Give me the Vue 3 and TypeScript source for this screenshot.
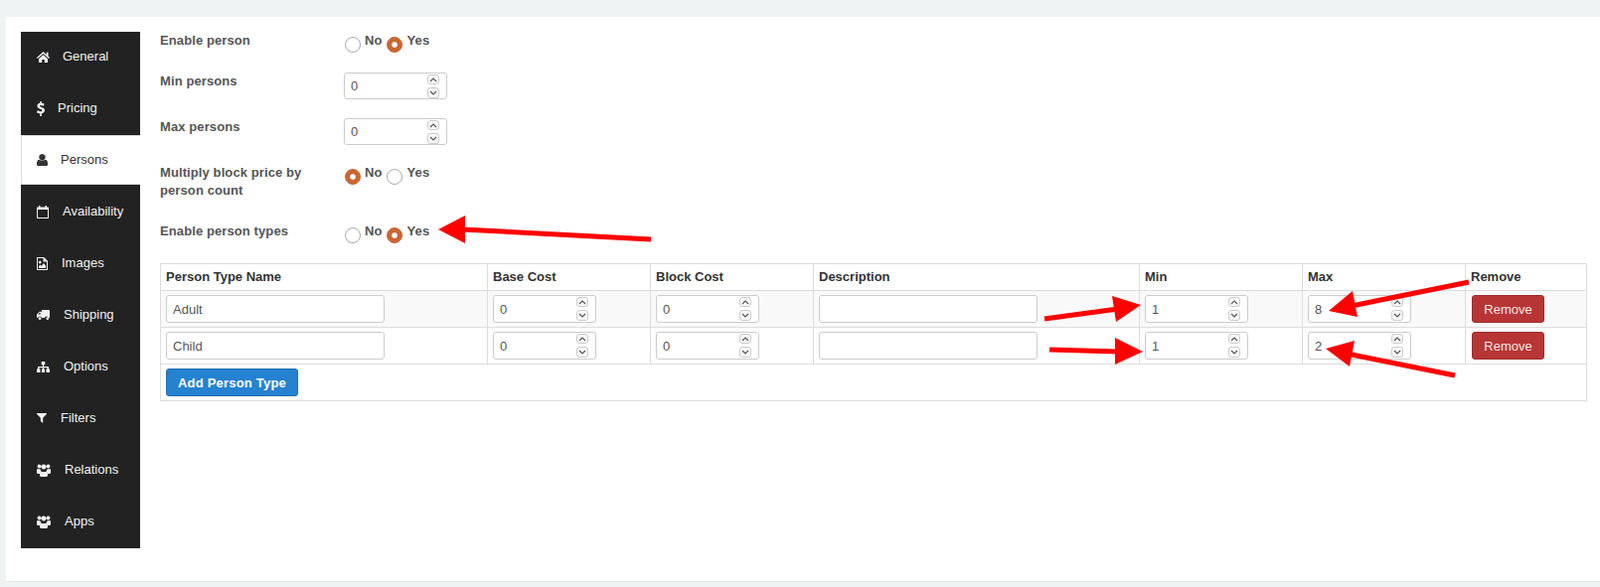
<script setup lang="ts">
interface Tab { label: string; w: number; h: number; gap: number; icon: string; active?: boolean }
const users = 'M7 .6a2.500 2.500 0 1 1-.01 0zM2.500 .6a1.900 1.900 0 1 1-.01 0zM11.500 .6a1.900 1.900 0 1 1-.01 0zM0 5.200h3.300c.3 1 .8 1.700 1.500 2.200C3.600 7.900 3 8.900 2.900 10H1C.3 10 0 9.400 0 8.600zM14 5.200h-3.300c-.3 1-.8 1.700-1.500 2.200 1.200.5 1.800 1.500 1.900 2.600H13c.7 0 1-.6 1-1.400zM4.400 8h5.200c.9 0 1.400 1 1.400 2.400v1.200c0 .8-.5 1.400-1.300 1.400H4.300c-.8 0-1.300-.6-1.300-1.400v-1.200C3 9 3.500 8 4.400 8z'
const tabs: Tab[] = [
  { label: 'General', w: 13, h: 11, gap: 13, icon: 'M6.500 0L9.800 3V.8h1.700v3.800L13 6l-.8.900-5.700-5-5.700 5L0 6zM2 7.200l4.500-4 4.500 4V11H7.800V8H5.200v3H2z' },
  { label: 'Pricing', w: 8, h: 15, gap: 13, icon: 'M3.300 0h1.500v1.800c1.200.1 2.200.4 2.800.9l-.7 2C6.100 4.200 5.100 3.900 4.100 3.900c-.8 0-1.200.3-1.200.7 0 .5.600.8 1.900 1.300C6.900 6.600 8 7.500 8 9.100c0 1.600-1.100 2.900-3.100 3.200V15H3.300v-2.700c-1.200-.1-2.500-.5-3.300-1.100l.8-2.100c.9.700 2 1.100 3.100 1.100.9 0 1.500-.4 1.500-1s-.6-.9-1.900-1.400C1.700 7.100.4 6.200.4 4.600.4 3.200 1.500 2.100 3.300 1.800z' },
  { label: 'Persons', w: 11, h: 12, gap: 13, active: true, icon: 'M5.500 0a3.200 3.200 0 1 1-.01 0zM2.600 5.800c.7.600 1.700 1 2.900 1s2.200-.4 2.900-1C10.100 6 11 7.300 11 9.600v.8c0 1-.7 1.600-1.600 1.600H1.600C.7 12 0 11.400 0 10.400v-.8C0 7.300.9 6 2.600 5.800z' },
  { label: 'Availability', w: 12, h: 13, gap: 14, icon: 'M2 0h1.500v1.500h5V0H10v1.500h1c.6 0 1 .4 1 1V12c0 .6-.4 1-1 1H1c-.6 0-1-.4-1-1V2.500c0-.6.4-1 1-1h1zM1 4v8h10V4z' },
  { label: 'Images', w: 11, h: 13, gap: 14, icon: 'M.8 0h6.400L11 3.800V12.200c0 .5-.3.8-.8.8H.8c-.5 0-.8-.3-.8-.8V.8C0 .3.300 0 .8 0zM1 1v11h9V4.500H6.500V1zM3.200 3.600a1.400 1.400 0 1 0 .01 0zM2 11h7V8.500L7 6 4.700 8.700 3.500 7.500 2 9z' },
  { label: 'Shipping', w: 13, h: 10, gap: 14, icon: 'M5 0h7.200c.5 0 .8.300.8.800V8h-1.200a2 2 0 0 0-3.900 0H5.100a2 2 0 0 0-3.900 0H.7C.3 8 0 7.700 0 7.300V4.500L2.800 1.700H5zM2.700 3l-1.500 1.500h2.500V3zM3.100 7.300a1.300 1.300 0 1 1 0 2.700 1.300 1.300 0 1 1 0-2.700zM10.800 7.300a1.300 1.300 0 1 1 0 2.700 1.300 1.300 0 1 1 0-2.700z' },
  { label: 'Options', w: 13, h: 11, gap: 14, icon: 'M4.700 0h3.600v3.400H7V5h4.300c.4 0 .7.300.7.700V7.600h1V11H9.500V7.600h1V6.200H7v1.400h1V11H5V7.600h1V6.200H2.500v1.400h1V11H0V7.600h1V5.700c0-.4.300-.7.700-.7H6V3.400H4.700z' },
  { label: 'Filters', w: 10, h: 10, gap: 14, icon: 'M0 0h10v.8L6.200 4.800V10L3.800 8V4.800L0 .8z' },
  { label: 'Relations', w: 14, h: 13, gap: 14, icon: users },
  { label: 'Apps', w: 14, h: 13, gap: 14, icon: users }
]
const rows = [
  { name: 'Adult', min: '1', max: '8' },
  { name: 'Child', min: '1', max: '2' }
]
const headers = ['Person Type Name', 'Base Cost', 'Block Cost', 'Description', 'Min', 'Max', 'Remove']
const colWidths = [329, 164, 164, 328, 164, 164, 122]
const arrows = [
  { tail: '655,241 465,231', head: '441,231 468,217 468,245' },
  { tail: '1051,321 1125,311', head: '1148,307 1119,298 1123,324' },
  { tail: '1056,352 1125,354', head: '1150,354 1122,340 1122,367' },
  { tail: '1478,284 1360,308', head: '1337,313 1361,293 1366,319' },
  { tail: '1464,378 1355,356', head: '1334,351 1363,343 1358,369' }
]
</script>

<template>
  <div class="panel">
    <nav class="tabs">
      <a v-for="t in tabs" :key="t.label" class="tab" :class="{ active: t.active }">
        <svg class="ico" :width="t.w" :height="t.h" :viewBox="`0 0 ${t.w} ${t.h}`" :style="{ marginRight: `${t.gap}px` }">
          <path :d="t.icon" fill="currentColor" :fill-rule="t.icon === users ? 'nonzero' : 'evenodd'" />
        </svg>
        <span>{{ t.label }}</span>
      </a>
    </nav>

    <section class="content">
      <div class="field radio-field">
        <label class="lbl">Enable person</label>
        <div class="radios">
          <span class="radio"></span><b>No</b>
          <span class="radio on"></span><b>Yes</b>
        </div>
      </div>
      <div class="field input-field">
        <label class="lbl">Min persons</label>
        <span class="num"><input value="0" /><span class="spin"><i class="up"><svg width="8" height="5" viewBox="0 0 8 5"><path d="M1 4l3-3 3 3" /></svg></i><i class="down"><svg width="8" height="5" viewBox="0 0 8 5"><path d="M1 1l3 3 3-3" /></svg></i></span></span>
      </div>
      <div class="field input-field">
        <label class="lbl">Max persons</label>
        <span class="num"><input value="0" /><span class="spin"><i class="up"><svg width="8" height="5" viewBox="0 0 8 5"><path d="M1 4l3-3 3 3" /></svg></i><i class="down"><svg width="8" height="5" viewBox="0 0 8 5"><path d="M1 1l3 3 3-3" /></svg></i></span></span>
      </div>
      <div class="field radio-field">
        <label class="lbl">Multiply block price by person count</label>
        <div class="radios">
          <span class="radio on"></span><b>No</b>
          <span class="radio"></span><b>Yes</b>
        </div>
      </div>
      <div class="field radio-field">
        <label class="lbl">Enable person types</label>
        <div class="radios">
          <span class="radio"></span><b>No</b>
          <span class="radio on"></span><b>Yes</b>
        </div>
      </div>

      <table class="grid">
        <colgroup><col v-for="(w, i) in colWidths" :key="i" :style="{ width: `${w}px` }" /></colgroup>
        <thead>
          <tr><th v-for="h in headers" :key="h">{{ h }}</th></tr>
        </thead>
        <tbody>
          <tr v-for="(r, i) in rows" :key="r.name" :class="{ odd: i === 0 }">
            <td><input class="text name" :value="r.name" /></td>
            <td v-for="n in 2" :key="n">
              <span class="num"><input value="0" /><span class="spin"><i class="up"><svg width="8" height="5" viewBox="0 0 8 5"><path d="M1 4l3-3 3 3" /></svg></i><i class="down"><svg width="8" height="5" viewBox="0 0 8 5"><path d="M1 1l3 3 3-3" /></svg></i></span></span>
            </td>
            <td><input class="text desc" value="" /></td>
            <td v-for="(v, k) in [r.min, r.max]" :key="k">
              <span class="num"><input :value="v" /><span class="spin"><i class="up"><svg width="8" height="5" viewBox="0 0 8 5"><path d="M1 4l3-3 3 3" /></svg></i><i class="down"><svg width="8" height="5" viewBox="0 0 8 5"><path d="M1 1l3 3 3-3" /></svg></i></span></span>
            </td>
            <td><button class="btn red">Remove</button></td>
          </tr>
          <tr>
            <td colspan="7"><button class="btn blue">Add Person Type</button></td>
          </tr>
        </tbody>
      </table>
    </section>

    <svg class="arrows" width="1610" height="591" viewBox="0 0 1610 591">
      <g v-for="(a, i) in arrows" :key="i">
        <polyline :points="a.tail" fill="none" stroke="#f00" stroke-width="5" />
        <polygon :points="a.head" fill="#f00" />
      </g>
    </svg>
  </div>
</template>

<style>
html, body { margin: 0; background: #eff3f4; overflow: hidden; }
</style>

<style scoped>
.panel {
  display: flex;
  gap: 20px;
  box-sizing: border-box;
  height: 569px;
  margin: 17px 0 5px 6px;
  padding: 15px 14px 0 15px;
  background: #fff;
  border-bottom: 1px solid #e6eaeb;
  font: 13px/18px "Liberation Sans", Arial, sans-serif;
  color: #333;
}
.tabs {
  flex: none;
  width: 120px;
  height: 520px;
  display: flex;
  flex-direction: column;
  background: #222;
}
.tab {
  flex: none;
  box-sizing: border-box;
  height: 52px;
  padding-left: 16px;
  padding-bottom: 2px;
  display: flex;
  align-items: center;
  color: #f2f2f2;
}
.tab.active {
  height: 50px;
  margin: 0 0 2px;
  background: #fff;
  color: #333;
  border: 1px solid #ddd;
  border-right: 0;
  padding-left: 15px;
  padding-bottom: 0;
}
.ico { flex: none; }
.content { flex: 1; min-width: 0; }
.field { display: flex; align-items: flex-start; }
.radio-field { margin-bottom: 23px; }
.input-field { margin-bottom: 19px; }
.input-field .num, .input-field .num input { height: 27px; }
.lbl {
  flex: none;
  width: 185px;
  box-sizing: border-box;
  padding-right: 20px;
  font-weight: 700;
  color: #555;
  letter-spacing: .1px;
}
.radios { display: flex; align-items: flex-start; height: 18px; color: #555; margin-left: 1px; }
.radios b { margin: 0 4px; letter-spacing: .1px; }
.radios b:last-child { margin-left: 5px; }
.radio {
  flex: none;
  box-sizing: border-box;
  width: 16px;
  height: 16px;
  margin-top: 5px;
  border: 1px solid #a9a9a9;
  border-radius: 50%;
  background: #fff;
}
.radio.on {
  border-color: #c0602f;
  background: radial-gradient(circle at 50% 50%, #fff 0 2px, #f3d8c8 2.6px, #c9652f 3.4px, #cf6d38 100%);
}
.num { position: relative; display: inline-block; width: 104px; height: 28px; vertical-align: top; }
.num input, .text {
  box-sizing: border-box;
  height: 28px;
  padding: 0 6px;
  border: 1px solid #ccc;
  border-radius: 3px;
  background: #fff;
  color: #555;
  font: 13px "Liberation Sans", Arial, sans-serif;
  outline: 0;
  display: block;
}
.num input { width: 104px; }
.spin {
  position: absolute;
  top: 2px;
  right: 8px;
  width: 12px;
  display: flex;
  flex-direction: column;
  gap: 3px;
}
.spin i {
  box-sizing: border-box;
  display: flex;
  align-items: center;
  justify-content: center;
  width: 12px;
  height: 10px;
  border: 1px solid #ccc;
  border-radius: 3px;
  background: #f8f8f8;
}
.spin i.down { height: 11px; }
.spin path { fill: none; stroke: #555; stroke-width: 1.2; }
.name { width: 220px; }
.desc { width: 220px; }
.grid {
  width: 1435px;
  table-layout: fixed;
  border-collapse: collapse;
  border: 1px solid #ddd;
}
.grid th, .grid td {
  box-sizing: border-box;
  padding: 4px 5px;
  border: 1px solid #ddd;
  text-align: left;
  vertical-align: top;
}
.grid th { color: #333; font-weight: 700; }
.grid .odd td { background: #f9f9f9; }
.btn {
  display: block;
  height: 28px;
  padding: 0;
  border-radius: 3px;
  font: 13px "Liberation Sans", Arial, sans-serif;
  color: #fff;
}
.red { width: 73px; margin-left: 1px; background: #b83535; border: 1px solid #9c2d2d; color: #f4e6e6; }
.blue { width: 133px; background: #2482d0; border: 1px solid #1f6fb2; font-weight: 700; letter-spacing: .2px; }
.arrows { position: absolute; left: 0; top: 0; pointer-events: none; }
</style>
